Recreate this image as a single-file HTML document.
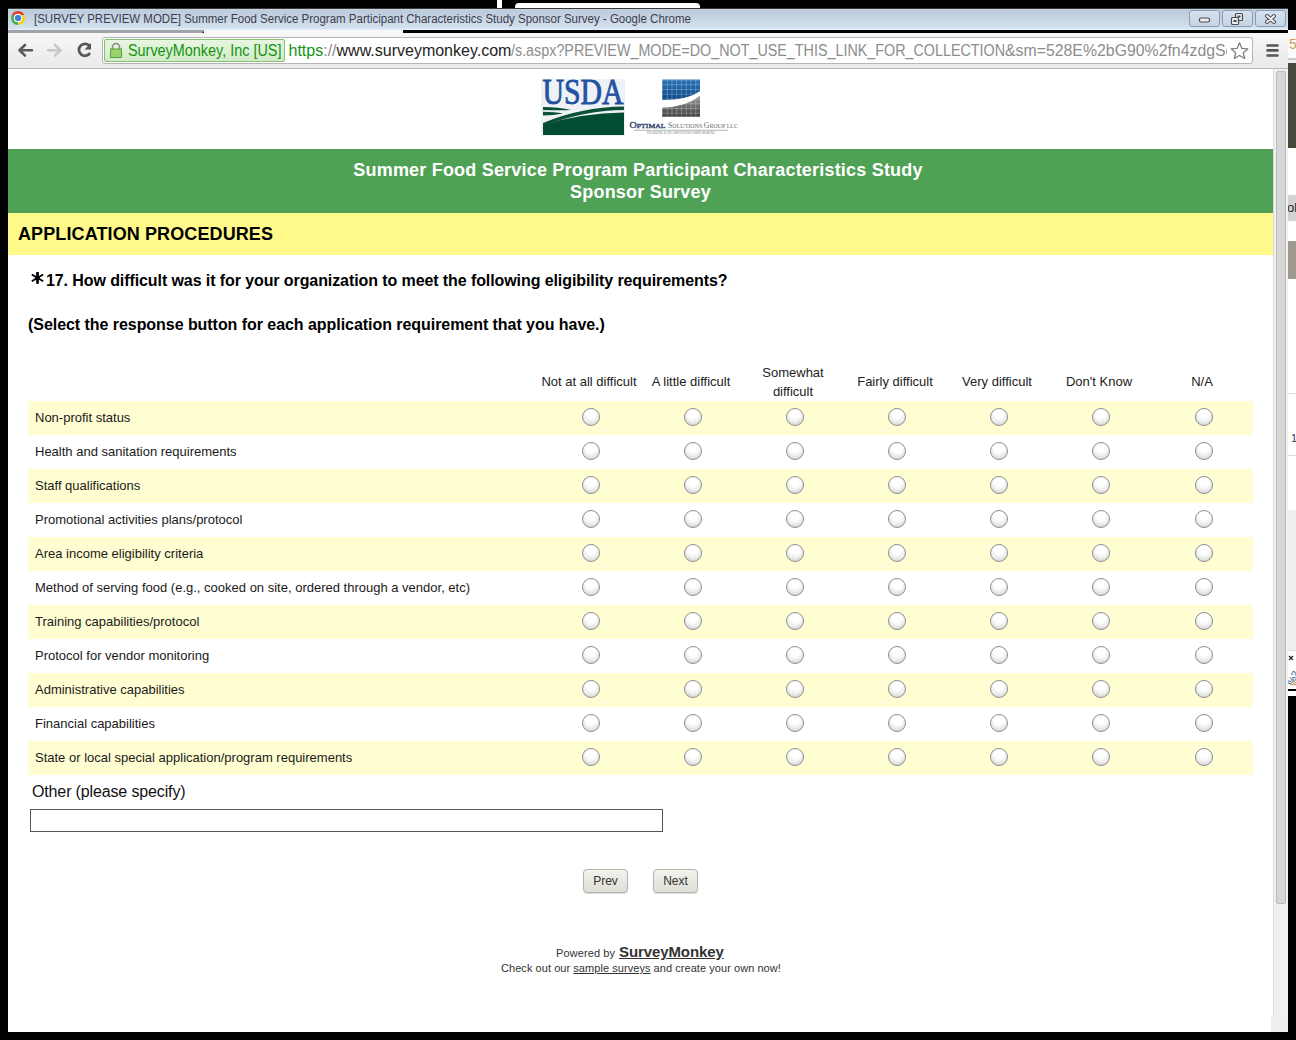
<!DOCTYPE html>
<html><head><meta charset="utf-8">
<style>
*{box-sizing:border-box;margin:0;padding:0}
html,body{width:1296px;height:1040px;overflow:hidden;background:#000;font-family:"Liberation Sans",sans-serif;position:relative}
.a{position:absolute}
.nw{white-space:nowrap}
.row{position:absolute;left:28px;width:1225px;height:34px}
.row.y{background:#fffed2}
.lbl{position:absolute;left:7px;top:9px;font-size:13px;color:#1a1a1a;white-space:nowrap}
.rad{position:absolute;top:7px;width:18px;height:18px;border-radius:50%;border:1.5px solid #8e8e8e;background:radial-gradient(circle at 50% 28%,#fff 0,#fff 32%,#f1f1f1 55%,#d6d6d6 85%,#c9c9c9 100%)}
.hdr{position:absolute;font-size:13px;color:#222;text-align:center;line-height:19px;white-space:nowrap}
.btn{position:absolute;top:869px;width:45px;height:24px;border:1px solid #b3b3ad;border-radius:4px;background:linear-gradient(#f3f3ee,#deded6);font-size:12px;color:#333;text-align:center;line-height:22px;box-shadow:0 1px 1px rgba(0,0,0,.15)}
.wb{position:absolute;top:10px;height:17px;border:1px solid #8b9db5;border-radius:3px;background:linear-gradient(#d7e1ee,#c5d3e4)}
</style></head><body>
<!-- top background fragments -->
<div class="a" style="left:497px;top:0;width:5px;height:8px;background:#fff"></div>
<div class="a" style="left:515px;top:3px;width:185px;height:6px;background:#fff;border-radius:4px 4px 0 0"></div>

<!-- title bar -->
<div class="a" style="left:8px;top:8px;width:1280px;height:1px;background:#3a3a3a"></div>
<div class="a" style="left:8px;top:9px;width:1280px;height:21px;background:linear-gradient(#c4d3e3 0,#bdccdb 12%,#d3e0ed 88%,#e4effa 100%)"></div>
<div class="a" style="left:11px;top:11px;width:14px;height:14px;border-radius:50%;background:conic-gradient(from 300deg,#e53a2c 0 120deg,#fcd116 120deg 240deg,#43b04a 240deg 360deg)"></div>
<div class="a" style="left:15.3px;top:15.3px;width:5.4px;height:5.4px;border-radius:50%;background:#3f7fcf;box-shadow:0 0 0 1.2px #eef4fa"></div>
<div id="ttext" class="a nw" style="left:34px;top:12px;font-size:12px;color:#3c3c50;transform:scaleX(0.957);transform-origin:0 0">[SURVEY PREVIEW MODE] Summer Food Service Program Participant Characteristics Study Sponsor Survey - Google Chrome</div>
<div class="wb" style="left:1189px;width:31px"></div>
<div class="wb" style="left:1222px;width:31px"></div>
<div class="wb" style="left:1255px;width:31px"></div>
<svg class="a" style="left:1189px;top:10px" width="100" height="17" viewBox="0 0 100 17">
 <rect x="10.5" y="8" width="10" height="4" rx="1.5" fill="#eee" stroke="#4a4a55" stroke-width="1.2"/>
 <rect x="46.5" y="3.5" width="7" height="7" rx="1" fill="#eee" stroke="#4a4a55" stroke-width="1.2"/>
 <rect x="48.5" y="5.5" width="3" height="2" fill="#4a4a55"/>
 <rect x="42.5" y="7.5" width="7" height="7" rx="1" fill="#eee" stroke="#4a4a55" stroke-width="1.2"/>
 <rect x="44.5" y="10" width="3" height="2" fill="#4a4a55"/>
 <path d="M78 6 L85 12 M85 6 L78 12" stroke="#4a4a55" stroke-width="4" stroke-linecap="round"/>
 <path d="M78 6 L85 12 M85 6 L78 12" stroke="#eef0f2" stroke-width="2" stroke-linecap="round"/>
</svg>

<div class="a" style="left:8px;top:30px;width:196px;height:3px;background:#a0a4a9;border-radius:0 0 3px 0"></div>
<div class="a" style="left:204px;top:30px;width:199px;height:3px;background:#f7f7f7"></div>
<div class="a" style="left:403px;top:30px;width:885px;height:3px;background:#000;border-radius:3px 0 0 0"></div>

<!-- right strip (other window) -->
<div class="a" style="left:1288px;top:30px;width:8px;height:28px;background:#fbfbfb"></div>
<div class="a nw" style="left:1289px;top:37px;font-size:14px;color:#d49a58;line-height:15px">5</div>
<div class="a" style="left:1288px;top:58px;width:8px;height:2px;background:#c8c8c8"></div>
<div class="a" style="left:1288px;top:60px;width:8px;height:3px;background:#ececec"></div>
<div class="a" style="left:1288px;top:63px;width:8px;height:85px;background:#4a483c"></div>
<div class="a" style="left:1288px;top:148px;width:8px;height:47px;background:#fff"></div>
<div class="a" style="left:1288px;top:195px;width:8px;height:26px;background:#d2d2d2"></div>
<div class="a nw" style="left:1287px;top:201px;font-size:13px;color:#223;line-height:14px">oll</div>
<div class="a" style="left:1288px;top:221px;width:8px;height:20px;background:#fff"></div>
<div class="a" style="left:1288px;top:241px;width:8px;height:38px;background:#9d9a8d"></div>
<div class="a" style="left:1288px;top:279px;width:8px;height:231px;background:#fff"></div>
<div class="a" style="left:1288px;top:393px;width:8px;height:1px;background:#ddd"></div>
<div class="a" style="left:1288px;top:455px;width:8px;height:1px;background:#ddd"></div>
<div class="a nw" style="left:1291px;top:433px;font-size:11px;color:#335;line-height:11px">1</div>
<div class="a" style="left:1288px;top:510px;width:8px;height:140px;background:#efefef"></div>
<div class="a" style="left:1288px;top:650px;width:8px;height:39px;background:#fff"></div>
<svg class="a" style="left:1288px;top:650px" width="8" height="39" viewBox="0 0 8 39"><rect x="0" y="0" width="8" height="1" fill="#ddd"/><path d="M1 6 L5 10 M5 6 L1 10" stroke="#223" stroke-width="1.2"/><text x="0" y="0" font-family="Liberation Sans" font-size="10" fill="#2a5a9a" transform="translate(5,36) rotate(-65)">%2</text><text x="0" y="0" font-family="Liberation Sans" font-size="10" fill="#c98a3a" transform="translate(8,38) rotate(-65)">V</text></svg>
<div class="a" style="left:1288px;top:689px;width:8px;height:2px;background:#000"></div>
<div class="a" style="left:1288px;top:691px;width:8px;height:5px;background:#fff"></div>

<!-- toolbar -->
<div class="a" style="left:8px;top:33px;width:1280px;height:36px;background:linear-gradient(#f7f7f7,#e9e9e9);border-bottom:1px solid #b9b9b9"></div>
<div class="a" style="left:102px;top:37px;width:1151px;height:27px;background:#fff;border:1px solid #b5b5b5;border-radius:3px"></div>
<div class="a" style="left:104px;top:39px;width:181px;height:23px;background:linear-gradient(#e8f6e2,#d2ebc6);border:1px solid #86c073;border-radius:2px"></div>
<div class="a nw" style="left:127.5px;top:41px;font-size:16px;line-height:20px;color:#129412;transform:scaleX(0.9);transform-origin:0 0">SurveyMonkey, Inc [US]</div>
<div class="a" style="left:288px;top:39px;width:939px;height:23px;overflow:hidden">
 <div class="a nw" style="left:0.5px;top:2px;font-size:16px;line-height:20px;color:#222"><span style="color:#129412">https</span><span style="color:#8c8c8c">:/&#8203;/</span>www.surveymonkey.com</div>
 <div class="a nw" style="left:223px;top:2px;font-size:16px;line-height:20px;color:#8c8c8c;transform:scaleX(0.8954);transform-origin:0 0">/s.aspx?PREVIEW_MODE=DO_NOT_USE_THIS_LINK_FOR_COLLECTION</div>
 <div class="a nw" style="left:717px;top:2px;font-size:16px;line-height:20px;color:#8c8c8c;transform:scaleX(0.99);transform-origin:0 0">&amp;sm=528E%2bG90%2fn4zdgSc</div>
</div>

<svg class="a" style="left:8px;top:33px" width="96" height="36" viewBox="0 0 96 36">
 <path d="M24 17.3 H12.5 M17 12 L11.5 17.3 L17 22.6" fill="none" stroke="#5a5a5a" stroke-width="2.6" stroke-linecap="round" stroke-linejoin="round"/>
 <path d="M40 17.3 H51.5 M47 12 L52.5 17.3 L47 22.6" fill="none" stroke="#c9c9c9" stroke-width="2.6" stroke-linecap="round" stroke-linejoin="round"/>
 <path d="M81.2 12.6 A6 6 0 1 0 82 20" fill="none" stroke="#565656" stroke-width="2.8"/>
 <path d="M76.5 16.5 L83 16.5 L83 10 Z" fill="#565656"/>
</svg>
<svg class="a" style="left:1228px;top:40px" width="56" height="22" viewBox="0 0 56 22">
 <path d="M11.5 2.8 L13.9 8.4 L19.8 8.9 L15.3 12.8 L16.7 18.5 L11.5 15.5 L6.3 18.5 L7.7 12.8 L3.2 8.9 L9.1 8.4 Z" fill="#fff" stroke="#808080" stroke-width="1.3" stroke-linejoin="round"/>
 <path d="M39.5 5.5 H49.5 M39.5 10.4 H49.5 M39.5 15.5 H49.5" stroke="#565656" stroke-width="2.6" stroke-linecap="round"/>
</svg>
<svg class="a" style="left:108px;top:42px" width="16" height="18" viewBox="0 0 16 18">
 <path d="M4.5 7 V5 A3.5 3.5 0 0 1 11.5 5 V7" fill="none" stroke="#8a8a8a" stroke-width="1.6"/>
 <rect x="2.5" y="7" width="11" height="8.5" fill="#9cd36b" stroke="#5f9e3c" stroke-width="1"/>
</svg>

<!-- content -->
<div class="a" style="left:8px;top:69px;width:1265px;height:963px;background:#fff"></div>
<!-- scrollbar -->
<div class="a" style="left:1273px;top:69px;width:15px;height:963px;background:#f0f0f0;border-left:1px solid #dadada"></div>
<div class="a" style="left:1276px;top:71px;width:10px;height:833px;background:#d6d6d6;border:1px solid #bcbcbc;border-radius:2px"></div>
<div class="a" style="left:1271px;top:1015px;width:17px;height:17px;background:#eee"></div>

<!-- logos -->
<svg class="a" style="left:541px;top:79px" width="84" height="57" viewBox="0 0 84 57">
 <rect x="0" y="0" width="84" height="57" fill="#eef1f6"/>
 <text x="1.5" y="24.6" font-family="Liberation Serif" font-size="36.5" fill="#2352a3" stroke="#2352a3" stroke-width="0.9" textLength="81" lengthAdjust="spacingAndGlyphs">USDA</text>
 <path d="M2 44 Q40 28 83 27.5 L83 31 Q45 31 2 47 Z" fill="#0b4f35"/>
 <path d="M2 28 Q18 28 30 31 Q18 31.5 2 31 Z" fill="#0b4f35"/>
 <path d="M2 32.8 Q14 33 22 34.5 Q12 36.5 2 36.5 Z" fill="#0b4f35"/>
 <path d="M2 46 Q40 34 83 33.5 L83 56 L2 56 Z" fill="#004d34"/>
</svg>
<svg class="a" style="left:628px;top:79px" width="112" height="58" viewBox="0 0 112 58">
 <defs>
  <linearGradient id="gb" x1="0" y1="0" x2="0" y2="1"><stop offset="0" stop-color="#2a74b8"/><stop offset="1" stop-color="#0d4585"/></linearGradient>
  <linearGradient id="gg" x1="0" y1="0" x2="0" y2="1"><stop offset="0" stop-color="#9a9a9a"/><stop offset="1" stop-color="#3f3f3f"/></linearGradient>
  <pattern id="grid" x="34" y="0.5" width="4.75" height="4.75" patternUnits="userSpaceOnUse"><path d="M0 0 H4.75 M0 0 V4.75" stroke="#fff" stroke-opacity=".6" stroke-width=".8"/></pattern>
 </defs>
 <path d="M34 0.5 H72 V12 Q60 21 34 21 Z" fill="url(#gb)"/>
 <path d="M34 28.8 Q58 28 72 16.8 V37.8 H34 Z" fill="url(#gg)"/>
 <rect x="34" y="0.5" width="38" height="37.3" fill="url(#grid)"/>
 <circle cx="63" cy="19.5" r="2.3" fill="#fff"/>
 <text x="1.6" y="49.3" font-family="Liberation Serif" font-size="9" fill="#2b3f6c" stroke="#2b3f6c" stroke-width="0.35" textLength="36" lengthAdjust="spacingAndGlyphs">O<tspan font-size="7">PTIMAL</tspan></text>
 <text x="40" y="49.3" font-family="Liberation Serif" font-size="9" fill="#6a6a6a" textLength="70" lengthAdjust="spacingAndGlyphs">S<tspan font-size="7">OLUTIONS </tspan>G<tspan font-size="7">ROUP LLC</tspan></text>
 <rect x="6" y="50.8" width="94" height="0.8" fill="#9aa"/>
 <text x="19" y="55" font-family="Liberation Serif" font-size="3.6" fill="#777" textLength="68" lengthAdjust="spacingAndGlyphs">ENABLING DATA-DRIVEN DECISION MAKING</text>
</svg>

<!-- header -->
<div class="a" style="left:8px;top:149px;width:1265px;height:64px;background:#4fa156"></div>
<div class="a nw" style="left:5.5px;width:1265px;top:159px;text-align:center;font-weight:bold;font-size:18px;line-height:22px;color:#fff;letter-spacing:0.2px">Summer Food Service Program Participant Characteristics Study</div>
<div class="a nw" style="left:8px;width:1265px;top:181px;text-align:center;font-weight:bold;font-size:18px;line-height:22px;color:#fff;letter-spacing:0.2px">Sponsor Survey</div>
<div class="a" style="left:8px;top:213px;width:1265px;height:42px;background:#fff98a"></div>
<div class="a nw" style="left:18px;top:224px;font-weight:bold;font-size:18px;color:#000;letter-spacing:0.11px">APPLICATION PROCEDURES</div>

<svg class="a" style="left:30px;top:271px" width="15" height="14" viewBox="0 0 15 14"><g stroke="#000" stroke-linecap="butt"><path d="M7.5 1 V12.8" stroke-width="2.7"/><path d="M1.8 3.5 L13.2 10.3" stroke-width="1.9"/><path d="M1.8 10.3 L13.2 3.5" stroke-width="1.9"/></g><rect x="5.2" y="5.2" width="4.6" height="3.6" fill="#000"/></svg>
<div class="a nw" style="left:46px;top:272px;font-weight:bold;font-size:16px;color:#000;letter-spacing:-0.09px">17. How difficult was it for your organization to meet the following eligibility requirements?</div>
<div class="a nw" style="left:28px;top:316px;font-weight:bold;font-size:16px;color:#000;letter-spacing:-0.05px">(Select the response button for each application requirement that you have.)</div>


<!-- table -->
<div class="hdr" style="left:529px;width:120px;top:372px">Not at all difficult</div>
<div class="hdr" style="left:631px;width:120px;top:372px">A little difficult</div>
<div class="hdr" style="left:733px;width:120px;top:363px">Somewhat<br>difficult</div>
<div class="hdr" style="left:835px;width:120px;top:372px">Fairly difficult</div>
<div class="hdr" style="left:937px;width:120px;top:372px">Very difficult</div>
<div class="hdr" style="left:1039px;width:120px;top:372px">Don't Know</div>
<div class="hdr" style="left:1142px;width:120px;top:372px">N/A</div>
<div class="row y" style="top:401px"><div class="lbl">Non-profit status</div><div class="rad" style="left:554px"></div><div class="rad" style="left:656px"></div><div class="rad" style="left:758px"></div><div class="rad" style="left:860px"></div><div class="rad" style="left:962px"></div><div class="rad" style="left:1064px"></div><div class="rad" style="left:1167px"></div></div>
<div class="row" style="top:435px"><div class="lbl">Health and sanitation requirements</div><div class="rad" style="left:554px"></div><div class="rad" style="left:656px"></div><div class="rad" style="left:758px"></div><div class="rad" style="left:860px"></div><div class="rad" style="left:962px"></div><div class="rad" style="left:1064px"></div><div class="rad" style="left:1167px"></div></div>
<div class="row y" style="top:469px"><div class="lbl">Staff qualifications</div><div class="rad" style="left:554px"></div><div class="rad" style="left:656px"></div><div class="rad" style="left:758px"></div><div class="rad" style="left:860px"></div><div class="rad" style="left:962px"></div><div class="rad" style="left:1064px"></div><div class="rad" style="left:1167px"></div></div>
<div class="row" style="top:503px"><div class="lbl">Promotional activities plans/protocol</div><div class="rad" style="left:554px"></div><div class="rad" style="left:656px"></div><div class="rad" style="left:758px"></div><div class="rad" style="left:860px"></div><div class="rad" style="left:962px"></div><div class="rad" style="left:1064px"></div><div class="rad" style="left:1167px"></div></div>
<div class="row y" style="top:537px"><div class="lbl">Area income eligibility criteria</div><div class="rad" style="left:554px"></div><div class="rad" style="left:656px"></div><div class="rad" style="left:758px"></div><div class="rad" style="left:860px"></div><div class="rad" style="left:962px"></div><div class="rad" style="left:1064px"></div><div class="rad" style="left:1167px"></div></div>
<div class="row" style="top:571px"><div class="lbl">Method of serving food (e.g., cooked on site, ordered through a vendor, etc)</div><div class="rad" style="left:554px"></div><div class="rad" style="left:656px"></div><div class="rad" style="left:758px"></div><div class="rad" style="left:860px"></div><div class="rad" style="left:962px"></div><div class="rad" style="left:1064px"></div><div class="rad" style="left:1167px"></div></div>
<div class="row y" style="top:605px"><div class="lbl">Training capabilities/protocol</div><div class="rad" style="left:554px"></div><div class="rad" style="left:656px"></div><div class="rad" style="left:758px"></div><div class="rad" style="left:860px"></div><div class="rad" style="left:962px"></div><div class="rad" style="left:1064px"></div><div class="rad" style="left:1167px"></div></div>
<div class="row" style="top:639px"><div class="lbl">Protocol for vendor monitoring</div><div class="rad" style="left:554px"></div><div class="rad" style="left:656px"></div><div class="rad" style="left:758px"></div><div class="rad" style="left:860px"></div><div class="rad" style="left:962px"></div><div class="rad" style="left:1064px"></div><div class="rad" style="left:1167px"></div></div>
<div class="row y" style="top:673px"><div class="lbl">Administrative capabilities</div><div class="rad" style="left:554px"></div><div class="rad" style="left:656px"></div><div class="rad" style="left:758px"></div><div class="rad" style="left:860px"></div><div class="rad" style="left:962px"></div><div class="rad" style="left:1064px"></div><div class="rad" style="left:1167px"></div></div>
<div class="row" style="top:707px"><div class="lbl">Financial capabilities</div><div class="rad" style="left:554px"></div><div class="rad" style="left:656px"></div><div class="rad" style="left:758px"></div><div class="rad" style="left:860px"></div><div class="rad" style="left:962px"></div><div class="rad" style="left:1064px"></div><div class="rad" style="left:1167px"></div></div>
<div class="row y" style="top:741px"><div class="lbl">State or local special application/program requirements</div><div class="rad" style="left:554px"></div><div class="rad" style="left:656px"></div><div class="rad" style="left:758px"></div><div class="rad" style="left:860px"></div><div class="rad" style="left:962px"></div><div class="rad" style="left:1064px"></div><div class="rad" style="left:1167px"></div></div>

<div class="a nw" style="left:32px;top:783px;font-size:16px;color:#111;letter-spacing:-0.14px">Other (please specify)</div>
<div class="a" style="left:30px;top:809px;width:633px;height:23px;border:1px solid #555;background:#fff"></div>
<div class="btn" style="left:583px">Prev</div>
<div class="btn" style="left:653px">Next</div>

<!-- footer -->
<div class="a nw" style="left:556px;top:947px;font-size:11px;color:#333;letter-spacing:0.1px">Powered by</div>
<div class="a nw" style="left:619px;top:943px;font-size:15px;font-weight:bold;color:#333;text-decoration:underline;letter-spacing:-0.1px">SurveyMonkey</div>
<div class="a nw" style="left:501px;top:962px;font-size:11px;color:#333;letter-spacing:0.055px">Check out our <u>sample surveys</u> and create your own now!</div>
</body></html>
